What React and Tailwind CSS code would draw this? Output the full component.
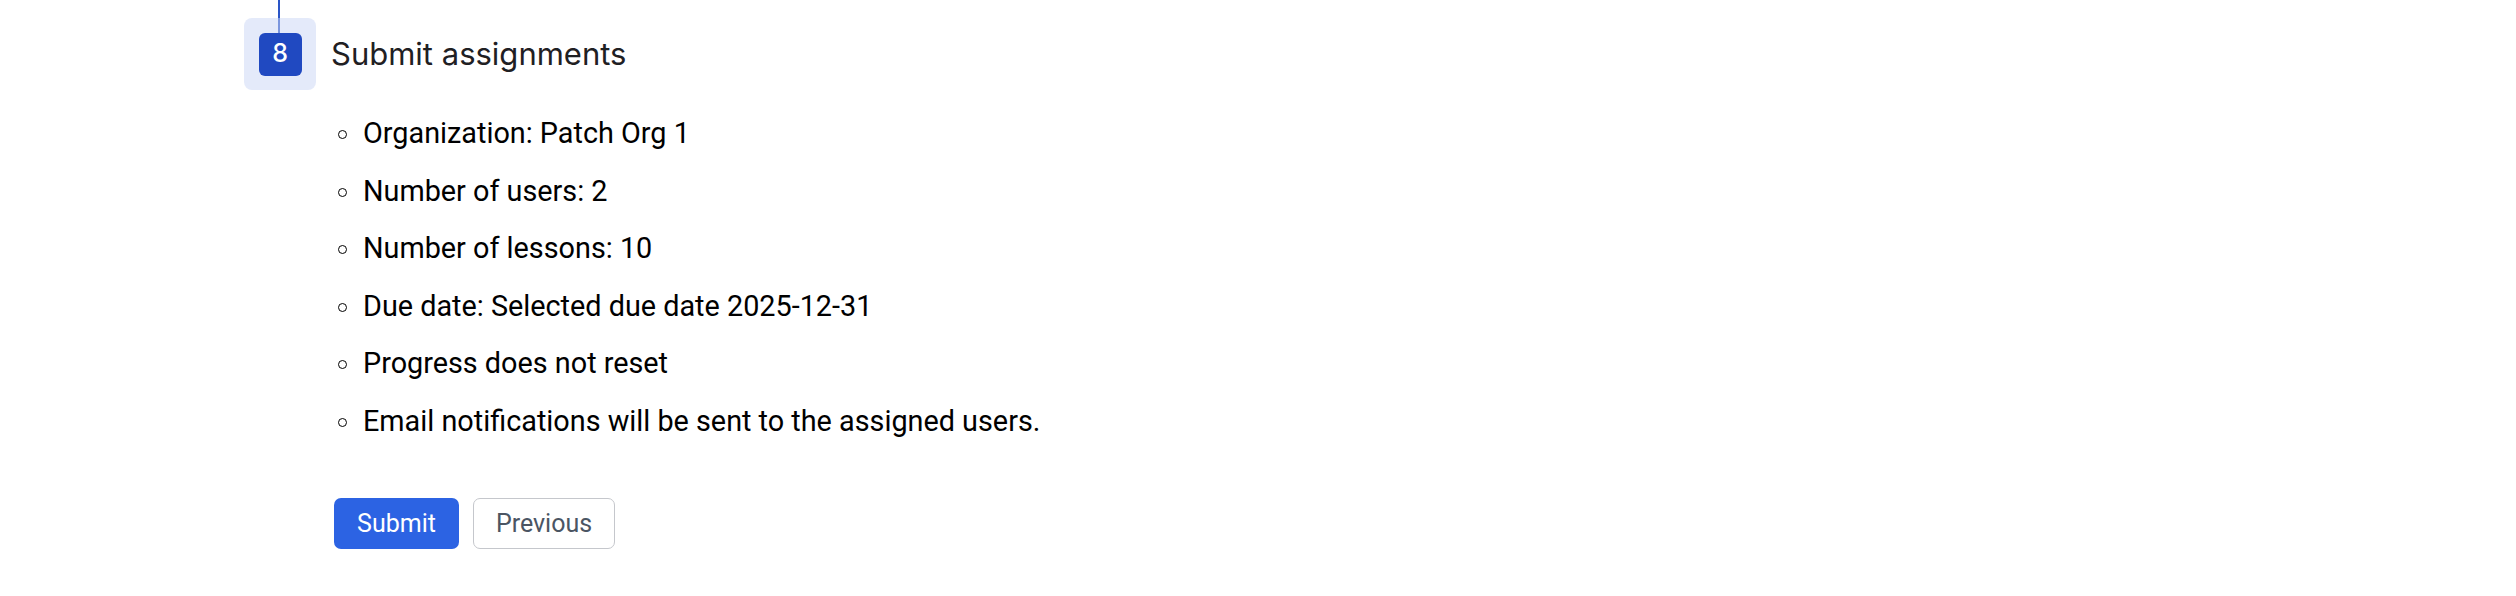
export default function App() {
  const items = [
    "Organization: Patch Org 1",
    "Number of users: 2",
    "Number of lessons: 10",
    "Due date: Selected due date 2025-12-31",
    "Progress does not reset",
    "Email notifications will be sent to the assigned users.",
  ];
  return (
    <div className="min-h-[596px] w-full bg-white pl-[244px] pt-[18px]">
      <div className="relative flex items-center gap-[15px]">
        <div className="absolute left-[34px] top-[-18px] h-[33px] w-[2px] bg-[#2a55c7]" />
        <div className="relative flex h-[72px] w-[72px] items-center justify-center rounded-[8px] bg-[rgba(202,214,245,0.51)]">
          <div
            className="flex h-[43px] w-[43px] items-center justify-center rounded-[6px] bg-[#2049c1] text-[25px] font-medium text-white"
            style={{ fontFamily: "Inter, sans-serif" }}
          >
            8
          </div>
        </div>
        <h2
          className="text-[31px] font-normal leading-[40px] text-[#1f2023]"
          style={{ fontFamily: "Inter, sans-serif" }}
        >
          Submit assignments
        </h2>
      </div>
      <div className="ml-[90px] mt-[15px]" style={{ fontFamily: "Roboto, sans-serif" }}>
        <ul className="pl-[4px]">
          {items.map((t) => (
            <li key={t} className="flex h-[57.5px] items-center gap-[16px] text-[28.8px] text-black">
              <span className="mt-[2px] block h-[9px] w-[9px] shrink-0 rounded-full border border-black" />
              <span className="leading-[57.5px]">{t}</span>
            </li>
          ))}
        </ul>
        <div className="mt-[48px] flex gap-[14px]">
          <button className="h-[51px] w-[125px] rounded-[7px] bg-[#2c63e3] text-[25px] text-white">
            Submit
          </button>
          <button className="h-[51px] w-[142px] rounded-[7px] border border-[#c5c7cc] bg-white text-[25px] text-[#4b5563]">
            Previous
          </button>
        </div>
      </div>
    </div>
  );
}
